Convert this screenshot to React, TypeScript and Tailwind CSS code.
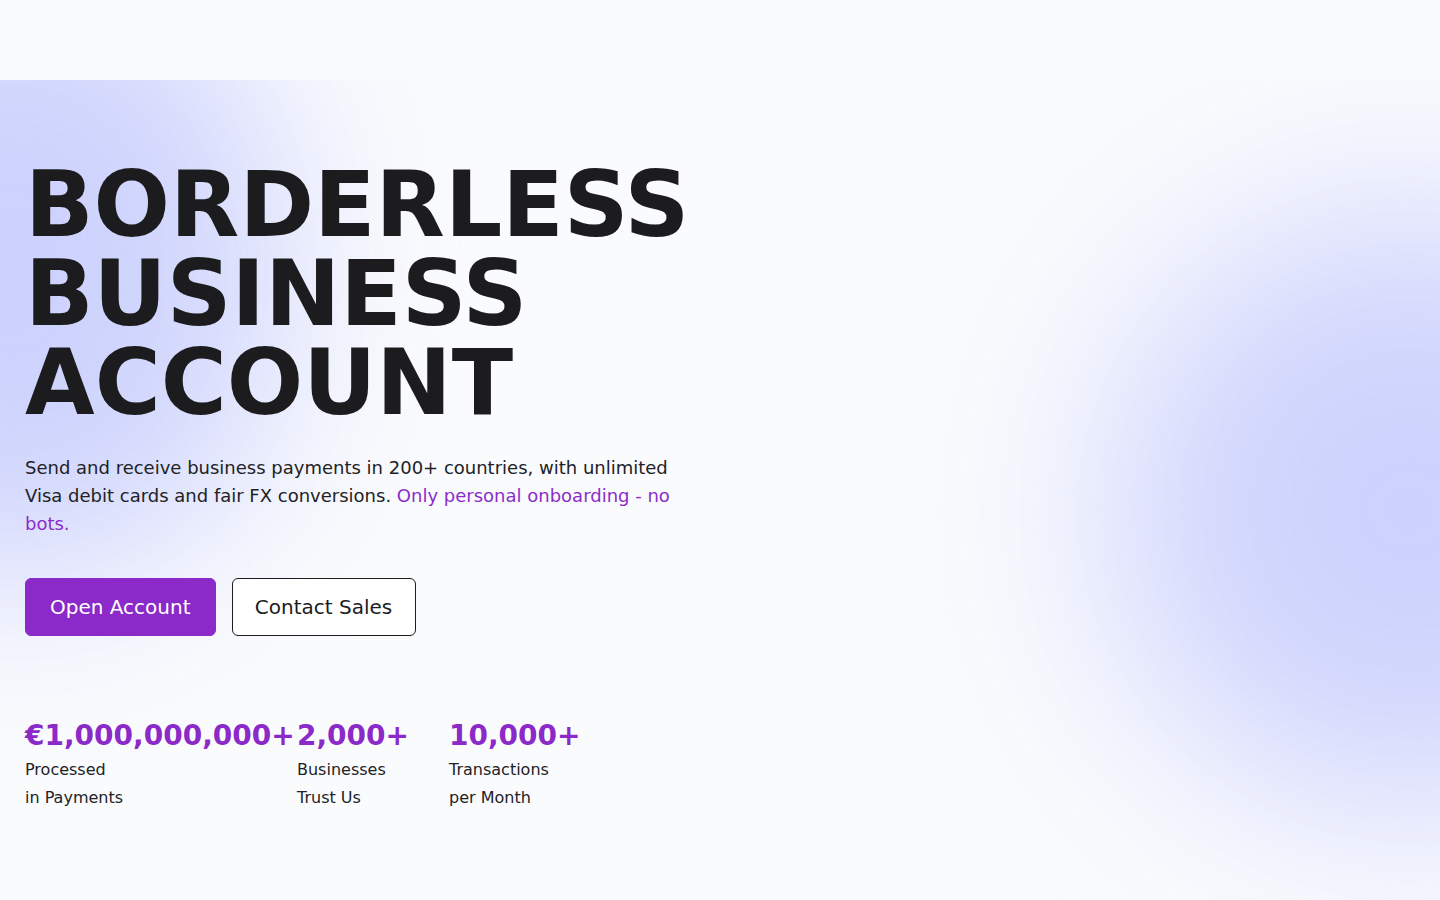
import React from 'react';

const stats = [
  { value: '€1,000,000,000+', line1: 'Processed', line2: 'in Payments', width: 'w-[272px]' },
  { value: '2,000+', line1: 'Businesses', line2: 'Trust Us', width: 'w-[152px]' },
  { value: '10,000+', line1: 'Transactions', line2: 'per Month', width: 'w-[200px]' },
];

export default function App() {
  return (
    <div className="min-h-screen bg-[#fafbfd] font-['DejaVu_Sans',sans-serif] text-[#1c1c1f]">
      {/* Nav placeholder */}
      <header className="h-20" />

      <section className="relative overflow-hidden h-[820px]">
        {/* Background glows */}
        <div className="absolute -left-[260px] -top-[120px] w-[540px] h-[620px] rounded-full bg-[#c9cffd] opacity-90 blur-[90px]" />
        <div className="absolute -right-[270px] top-[130px] w-[600px] h-[600px] rounded-full bg-[#c9cffd] opacity-90 blur-[100px]" />

        <div className="relative pl-[25px] pt-20 max-w-[720px]">
          <h1 className="text-[90px] leading-[89px] font-bold text-[#1c1c1f]">
            BORDERLESS
            <br />
            BUSINESS
            <br />
            ACCOUNT
          </h1>

          <p className="mt-[27px] max-w-[672px] text-lg leading-7 text-[#222226]">
            Send and receive business payments in 200+ countries, with unlimited Visa debit cards and fair FX
            conversions. <span className="text-[#8b2dcb]">Only personal onboarding - no bots.</span>
          </p>

          <div className="mt-10 flex gap-4">
            <button className="px-6 py-3.5 text-xl leading-7 text-white bg-[#8b2ac9] border border-[#8b2ac9] rounded-md">
              Open Account
            </button>
            <button className="w-[184px] py-3.5 text-xl leading-7 text-[#1c1c1f] bg-white border border-[#1c1c1f] rounded-md">
              Contact Sales
            </button>
          </div>

          <div className="mt-20 flex">
            {stats.map((s) => (
              <div key={s.value} className={s.width}>
                <div className="text-[28px] leading-10 font-bold text-[#8b2ac9] whitespace-nowrap">{s.value}</div>
                <div className="text-base leading-7 text-[#222226]">
                  {s.line1}
                  <br />
                  {s.line2}
                </div>
              </div>
            ))}
          </div>
        </div>
      </section>
    </div>
  );
}
